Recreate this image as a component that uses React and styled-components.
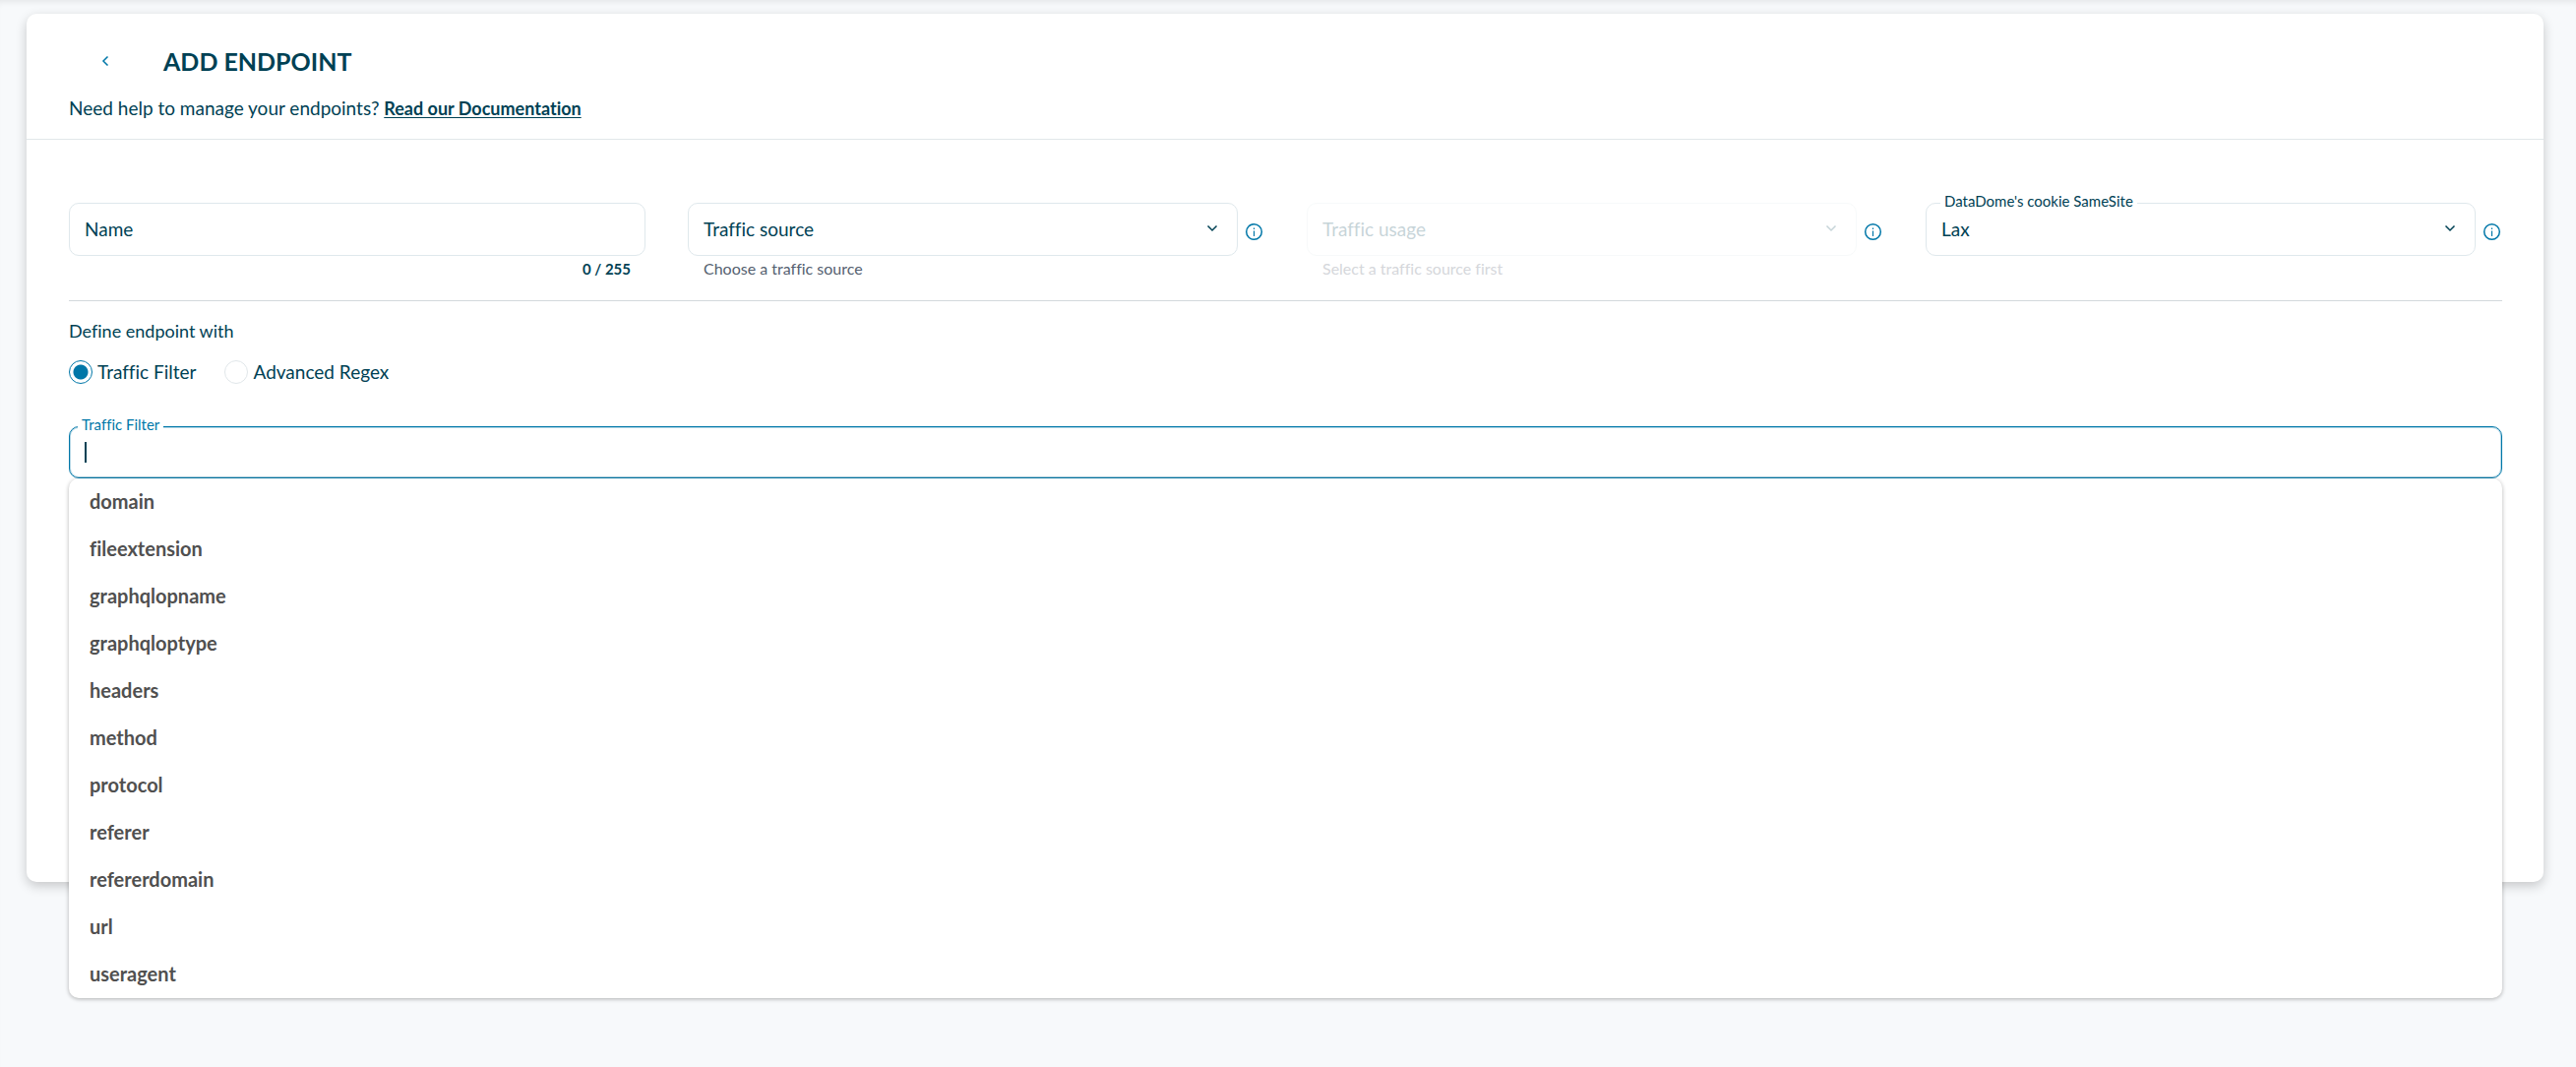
import React, { useState } from "react";
import styled, { createGlobalStyle } from "styled-components";

const filterKeys = [
  "domain",
  "fileextension",
  "graphqlopname",
  "graphqloptype",
  "headers",
  "method",
  "protocol",
  "referer",
  "refererdomain",
  "url",
  "useragent",
];

const GlobalStyle = createGlobalStyle`
  * {
    box-sizing: border-box;
  }

  body {
    margin: 0;
    min-height: 100vh;
    background: #f7f9fb;
    color: #004154;
    font-family: Lato, "Liberation Sans", sans-serif;
    font-size: 19px;
    line-height: 24px;
    font-variant-ligatures: none;
  }

  button,
  input,
  select {
    font: inherit;
    color: inherit;
  }
`;

const Page = styled.div`
  min-height: 100vh;
  padding: 14px 33px 64px 27px;
  box-shadow: inset 0 6px 6px -4px rgba(0, 0, 0, 0.08);
`;

const Card = styled.main`
  min-height: 882px;
  background: #fff;
  border-radius: 10px;
  box-shadow: 0 4px 12px rgba(0, 0, 0, 0.2);
`;

const CardHeader = styled.header`
  padding: 30px 43px 18px;
  border-bottom: 1px solid #e1e7ea;
`;

const TitleRow = styled.div`
  display: flex;
  align-items: center;
  gap: 22px;
`;

const BackButton = styled.button`
  display: flex;
  align-items: center;
  justify-content: center;
  width: 74px;
  height: 36px;
  padding: 0;
  border: 0;
  background: none;
  color: #0077a8;
  cursor: pointer;
`;

const Title = styled.h1`
  margin: 0;
  font-size: 25px;
  line-height: 36px;
  font-weight: 700;
`;

const HelpText = styled.p`
  margin: 18px 0 0;
  padding-bottom: 1px;
`;

const DocLink = styled.a`
  color: inherit;
  font-size: 18px;
  font-weight: 700;
  text-underline-offset: 2px;
  text-decoration-skip-ink: none;
`;

const Form = styled.form`
  padding: 64px 42px 0 43px;
`;

const FieldGrid = styled.div`
  display: grid;
  grid-template-columns: repeat(4, minmax(0, 1fr));
  gap: 43px;
  min-height: 100px;
  padding-bottom: 18px;
  border-bottom: 1px solid #d3d9dc;
`;

const Field = styled.div`
  display: flex;
  flex-direction: column;
`;

const FieldRow = styled.div`
  display: flex;
  align-items: center;
  gap: 7px;
`;

const Control = styled.div`
  position: relative;
  flex: 1;
  min-width: 0;
  opacity: ${(props) => (props.$disabled ? 0.22 : 1)};
`;

const TextInput = styled.input`
  display: block;
  width: 100%;
  height: 54px;
  padding: 0 15px 2px;
  border: 1px solid #dfe8ec;
  border-radius: 10px;
  background: #fff;
  outline: none;

  &::placeholder {
    color: #004154;
    opacity: 1;
  }
`;

const FilterInput = styled(TextInput)`
  height: 53px;
  border-color: #0077a8;
  box-shadow: inset 0 0 0 1px rgba(0, 119, 168, 0.3);
  caret-color: ${(props) => (props.value ? "#004154" : "transparent")};
`;

const Caret = styled.span`
  position: absolute;
  top: 16px;
  left: 16px;
  width: 2px;
  height: 21px;
  background: #004154;
  pointer-events: none;
`;

const Select = styled.select`
  display: block;
  width: 100%;
  height: 54px;
  padding: 0 48px 1px 15px;
  border: 1px solid #dfe8ec;
  border-radius: 10px;
  background: #fff;
  appearance: none;
  outline: none;

  &:disabled {
    opacity: 1;
  }
`;

const SelectArrow = styled.svg`
  position: absolute;
  top: 22px;
  right: 20px;
  pointer-events: none;
`;

const FloatingLabel = styled.label`
  position: absolute;
  top: -11px;
  left: ${(props) => props.$left || 15}px;
  padding: 0 4px;
  background: #fff;
  color: ${(props) => (props.$active ? "#0077a8" : "#004154")};
  font-size: 15px;
  line-height: 18px;
`;

const InfoButton = styled.button`
  display: flex;
  width: 20px;
  height: 20px;
  margin-top: 6px;
  padding: 0;
  border: 0;
  background: none;
  color: #0077a8;
  cursor: pointer;
`;

const Hint = styled.span`
  padding: 3px 16px 0;
  color: ${(props) => (props.$disabled ? "#d5d7db" : "#555f70")};
  font-size: 16px;
  line-height: 20px;
`;

const Counter = styled.span`
  padding: 3px 15px 0;
  font-size: 15px;
  line-height: 20px;
  font-weight: 700;
  text-align: right;
`;

const RadioGroup = styled.fieldset`
  min-width: 0;
  margin: 0;
  padding: 18px 0 0;
  border: 0;
`;

const Legend = styled.legend`
  float: left;
  width: 100%;
  padding: 0;
  font-size: 18px;
`;

const RadioList = styled.div`
  display: flex;
  gap: 29px;
  clear: both;
  padding-top: 18px;
`;

const RadioLabel = styled.label`
  display: flex;
  align-items: center;
  gap: 5px;
  cursor: pointer;
`;

const Radio = styled.input`
  appearance: none;
  width: 24px;
  height: 24px;
  margin: 0;
  border: 1px solid #e1e7ea;
  border-radius: 50%;
  background: #fff;

  &:checked {
    border-color: #0077a8;
    background: radial-gradient(circle, #0077a8 7px, #fff 8px);
  }
`;

const FilterField = styled.div`
  position: relative;
  margin-top: 43px;
`;

const Suggestions = styled.ul`
  position: absolute;
  top: 100%;
  left: 0;
  right: 0;
  margin: 0;
  padding: 0;
  border-radius: 10px;
  background: #fff;
  box-shadow: 0 1px 4px rgba(0, 0, 0, 0.3);
  list-style: none;
`;

const Suggestion = styled.li`
  padding: 11px 21px 13px;
  color: #505050;
  font-size: 20px;
  font-weight: 700;
  cursor: pointer;
`;

const Chevron = () => (
  <SelectArrow width="12" height="8" viewBox="0 0 12 8" fill="none" aria-hidden="true">
    <path d="M1.5 1.5L6 6L10.5 1.5" stroke="#004154" strokeWidth="1.5" />
  </SelectArrow>
);

const Info = ({ label }) => (
  <InfoButton type="button" aria-label={label}>
    <svg width="20" height="20" viewBox="0 0 20 20" fill="none" stroke="currentColor" aria-hidden="true">
      <circle cx="9.5" cy="9.5" r="7.8" strokeWidth="1.5" />
      <path d="M9.5 8.5V14" strokeWidth="1.2" />
      <path d="M9.5 5.5V7" strokeWidth="1.2" />
    </svg>
  </InfoButton>
);

const App = () => {
  const [name, setName] = useState("");
  const [mode, setMode] = useState("filter");
  const [filter, setFilter] = useState("");
  const [focused, setFocused] = useState(true);

  return (
    <>
      <GlobalStyle />
      <Page>
        <Card>
          <CardHeader>
            <TitleRow>
              <BackButton type="button" aria-label="Back">
                <svg width="8" height="12" viewBox="0 0 8 12" fill="none" aria-hidden="true">
                  <path d="M6.5 1.5L2 6L6.5 10.5" stroke="currentColor" strokeWidth="1.5" />
                </svg>
              </BackButton>
              <Title>ADD ENDPOINT</Title>
            </TitleRow>
            <HelpText>
              Need help to manage your endpoints? <DocLink href="#docs">Read our Documentation</DocLink>
            </HelpText>
          </CardHeader>
          <Form onSubmit={(event) => event.preventDefault()}>
            <FieldGrid>
              <Field>
                <TextInput
                  aria-label="Name"
                  placeholder="Name"
                  maxLength={255}
                  value={name}
                  onChange={(event) => setName(event.target.value)}
                />
                <Counter>{name.length} / 255</Counter>
              </Field>
              <Field>
                <FieldRow>
                  <Control>
                    <Select aria-label="Traffic source">
                      <option>Traffic source</option>
                    </Select>
                    <Chevron />
                  </Control>
                  <Info label="About traffic source" />
                </FieldRow>
                <Hint>Choose a traffic source</Hint>
              </Field>
              <Field>
                <FieldRow>
                  <Control $disabled>
                    <Select aria-label="Traffic usage" disabled>
                      <option>Traffic usage</option>
                    </Select>
                    <Chevron />
                  </Control>
                  <Info label="About traffic usage" />
                </FieldRow>
                <Hint $disabled>Select a traffic source first</Hint>
              </Field>
              <Field>
                <FieldRow>
                  <Control>
                    <Select id="samesite" defaultValue="Lax">
                      <option>Lax</option>
                      <option>Strict</option>
                      <option>None</option>
                    </Select>
                    <FloatingLabel htmlFor="samesite">DataDome's cookie SameSite</FloatingLabel>
                    <Chevron />
                  </Control>
                  <Info label="About cookie SameSite" />
                </FieldRow>
              </Field>
            </FieldGrid>
            <RadioGroup>
              <Legend>Define endpoint with</Legend>
              <RadioList>
                <RadioLabel>
                  <Radio
                    type="radio"
                    name="mode"
                    checked={mode === "filter"}
                    onChange={() => setMode("filter")}
                  />
                  Traffic Filter
                </RadioLabel>
                <RadioLabel>
                  <Radio
                    type="radio"
                    name="mode"
                    checked={mode === "regex"}
                    onChange={() => setMode("regex")}
                  />
                  Advanced Regex
                </RadioLabel>
              </RadioList>
            </RadioGroup>
            <FilterField>
              <FilterInput
                id="filter"
                autoFocus
                autoComplete="off"
                value={filter}
                onChange={(event) => setFilter(event.target.value)}
                onFocus={() => setFocused(true)}
                onBlur={() => setFocused(false)}
              />
              {/* steady cursor while the focused field is empty */}
              {focused && !filter && <Caret />}
              <FloatingLabel htmlFor="filter" $active $left={9}>
                Traffic Filter
              </FloatingLabel>
              <Suggestions>
                {filterKeys.map((key) => (
                  <Suggestion key={key}>{key}</Suggestion>
                ))}
              </Suggestions>
            </FilterField>
          </Form>
        </Card>
      </Page>
    </>
  );
};

export default App;
